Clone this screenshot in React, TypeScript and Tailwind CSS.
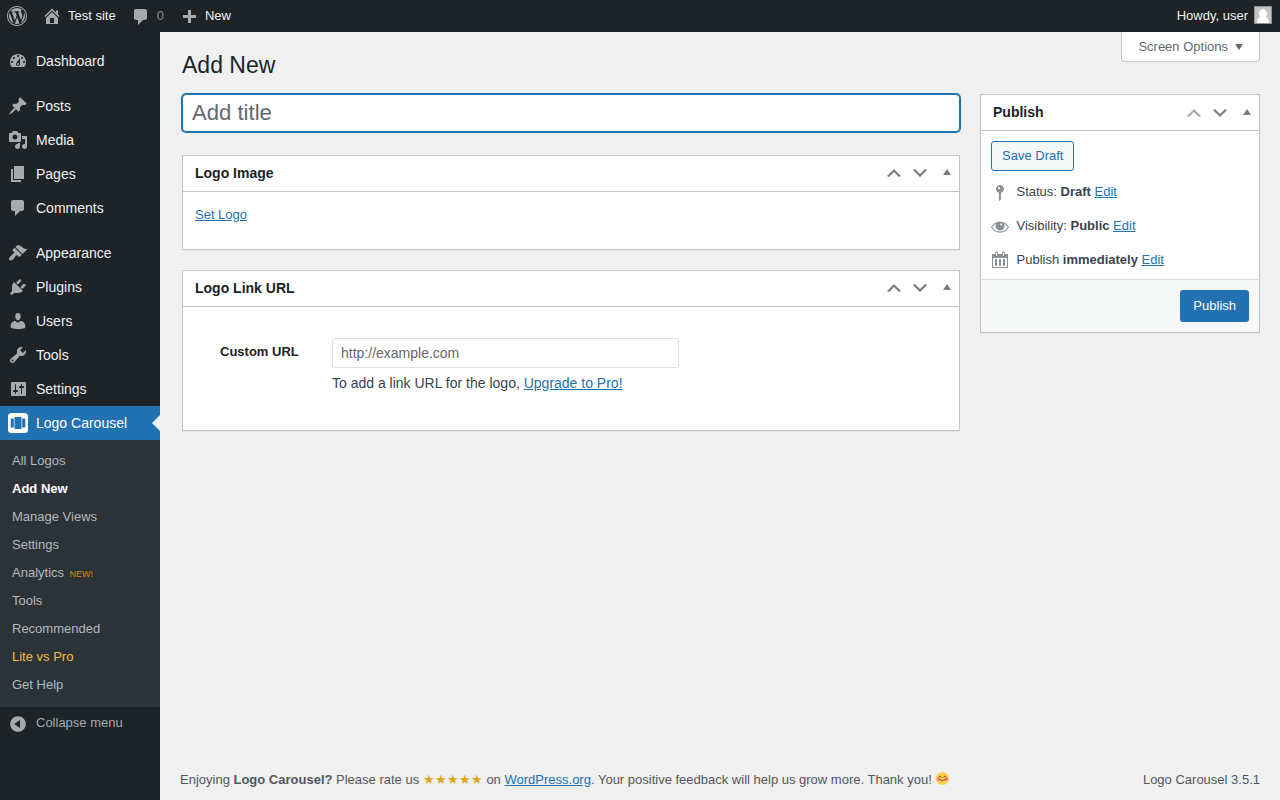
import React from 'react';

const icons = {
  wordpress:
    'M20 10c0-5.52-4.48-10-10-10S0 4.48 0 10s4.48 10 10 10 10-4.48 10-10zM10 1.01c4.97 0 8.99 4.02 8.99 8.99s-4.02 8.99-8.99 8.99S1.01 14.97 1.01 10 5.03 1.01 10 1.01zM8.01 14.82L4.96 6.61c.49-.03 1.05-.08 1.05-.08.43-.05.38-1.01-.06-.99 0 0-1.29.1-2.13.1-.15 0-.33 0-.52-.01 1.44-2.17 3.9-3.6 6.7-3.6 2.09 0 3.99.79 5.41 2.09-.6-.08-1.45.35-1.45 1.42 0 .66.38 1.22.79 1.88.31.54.5 1.22.5 2.21 0 1.34-1.27 4.48-1.27 4.48l-2.71-7.5c.48-.03.75-.16.75-.16.43-.05.38-1.1-.05-1.08 0 0-1.3.11-2.14.11-.78 0-2.11-.11-2.11-.11-.43-.02-.48 1.06-.05 1.08l.84.08 1.12 3.04zm6.02 2.15L16.64 10s.67-1.69.39-3.81c.63 1.14.94 2.42.94 3.81 0 2.96-1.56 5.58-3.94 6.97zM2.68 6.77L6.5 17.25c-2.67-1.3-4.47-4.08-4.47-7.25 0-1.16.2-2.23.65-3.23zm7.45 4.53l2.29 6.25c-.75.27-1.57.42-2.42.42-.72 0-1.41-.11-2.06-.3z',
  home: 'M16 8.5l1.53 1.53-1.06 1.06L10 4.6l-6.47 6.49-1.06-1.06L10 2.5l4 4v-2h2v4zm-6-2.46l6 5.99V18H4v-5.97zM12 17v-5H8v5h4z',
  comments: 'M5 2h9c1.1 0 2 .9 2 2v7c0 1.1-.9 2-2 2h-2l-5 5v-5H5c-1.1 0-2-.9-2-2V4c0-1.1.9-2 2-2z',
  plus: 'M17 7v3h-5v5H9v-5H4V7h5V2h3v5h5z',
  dashboard:
    'M3.76 16h12.48c1.1-1.37 1.76-3.11 1.76-5 0-4.42-3.58-8-8-8s-8 3.58-8 8c0 1.89.66 3.63 1.76 5zM10 4c.55 0 1 .45 1 1s-.45 1-1 1-1-.45-1-1 .45-1 1-1zM6 6c.55 0 1 .45 1 1s-.45 1-1 1-1-.45-1-1 .45-1 1-1zm8 0c.55 0 1 .45 1 1s-.45 1-1 1-1-.45-1-1 .45-1 1-1zm-5.37 5.55L12 7v6c0 1.1-.9 2-2 2s-2-.9-2-2c0-.57.24-1.08.63-1.45zM4 10c.55 0 1 .45 1 1s-.45 1-1 1-1-.45-1-1 .45-1 1-1zm12 0c.55 0 1 .45 1 1s-.45 1-1 1-1-.45-1-1 .45-1 1-1zm-5 3c0-.55-.45-1-1-1s-1 .45-1 1 .45 1 1 1 1-.45 1-1z',
  post: 'M10.44 3.02l1.82-1.82 6.36 6.35-1.83 1.82c-1.05-.68-2.48-.57-3.41.36l-.75.75c-.92.93-1.04 2.35-.35 3.41l-1.83 1.82-2.41-2.41-2.8 2.79c-.42.42-3.38 2.71-3.8 2.29s1.86-3.39 2.28-3.81l2.79-2.79L4.1 9.36l1.83-1.82c1.05.69 2.48.57 3.4-.36l.75-.75c.93-.92 1.05-2.35.36-3.41z',
  media:
    'M13 11V4c0-.55-.45-1-1-1h-1.67L9 1H5L3.67 3H2c-.55 0-1 .45-1 1v7c0 .55.45 1 1 1h10c.55 0 1-.45 1-1zM7 4.5c1.38 0 2.5 1.12 2.5 2.5S8.38 9.5 7 9.5 4.5 8.38 4.5 7 5.62 4.5 7 4.5zM14 6h5v10.5c0 1.38-1.12 2.5-2.5 2.5S14 17.88 14 16.5s1.12-2.5 2.5-2.5c.17 0 .34.02.5.05V9h-3V6zm-4 8.05V13h2v3.5c0 1.38-1.12 2.5-2.5 2.5S7 17.88 7 16.5 8.12 14 9.5 14c.17 0 .34.02.5.05z',
  page: 'M6 15V2h10v13H6zm-1 1h8v2H3V5h2v11z',
  appearance:
    'M14.48 11.06L7.41 3.99l1.5-1.5c.5-.56 2.3-.47 3.51.32 1.21.8 1.43 1.28 2.91 2.1 1.18.64 2.45 1.26 4.45.85zm-.71.71L6.7 4.7 4.93 6.47c-.39.39-.39 1.02 0 1.41l1.06 1.06c.39.39.39 1.03 0 1.42-.6.6-1.43 1.11-2.21 1.69-.35.26-.7.53-1.01.84C1.43 14.23.4 16.08 1.4 17.07c.99 1 2.84-.03 4.18-1.36.31-.31.58-.66.85-1.02.57-.78 1.08-1.61 1.69-2.21.39-.39 1.02-.39 1.41 0l1.06 1.06c.39.39 1.02.39 1.41 0z',
  plugins:
    'M13.11 4.36L9.87 7.6 8 5.73l3.24-3.24c.35-.34 1.05-.2 1.56.32.52.51.66 1.21.31 1.55zm-8 1.77l.91-1.12 9.01 9.01-1.19.84c-.71.71-2.63 1.16-3.82 1.16H6.14L4.9 17.26c-.59.59-1.54.59-2.12 0-.59-.58-.59-1.53 0-2.12l1.24-1.24v-3.88c0-1.13.4-3.19 1.09-3.89zm7.26 3.97l3.24-3.24c.34-.35 1.04-.21 1.55.31.52.51.66 1.21.31 1.55l-3.24 3.25z',
  users:
    'M10 9.25c-2.27 0-2.73-3.44-2.73-3.44C7 4.02 7.82 2 9.97 2c2.16 0 2.98 2.02 2.71 3.81 0 0-.41 3.44-2.68 3.44zm0 2.57L12.72 10c2.39 0 4.52 2.33 4.52 4.53v2.49s-3.65 1.13-7.24 1.13c-3.65 0-7.24-1.13-7.24-1.13v-2.49c0-2.25 1.94-4.48 4.47-4.48z',
  tools:
    'M16.68 9.77c-1.34 1.34-3.3 1.67-4.95.99l-5.41 6.52c-.99.99-2.59.99-3.58 0s-.99-2.59 0-3.57l6.52-5.42c-.68-1.65-.35-3.61.99-4.95 1.28-1.28 3.12-1.62 4.72-1.06l-2.89 2.89 2.82 2.82 2.86-2.87c.53 1.58.18 3.39-1.08 4.65zM3.81 16.21c.4.39 1.04.39 1.43 0 .4-.4.4-1.04 0-1.43-.39-.4-1.03-.4-1.43 0-.39.39-.39 1.03 0 1.43z',
  settings:
    'M18 16V4c0-.55-.45-1-1-1H4c-.55 0-1 .45-1 1v12c0 .55.45 1 1 1h13c.55 0 1-.45 1-1zM8 11h1c.55 0 1 .45 1 1s-.45 1-1 1H8v1.5c0 .28-.22.5-.5.5s-.5-.22-.5-.5V13H6c-.55 0-1-.45-1-1s.45-1 1-1h1V5.5c0-.28.22-.5.5-.5s.5.22.5.5V11zm5-2h-1c-.55 0-1-.45-1-1s.45-1 1-1h1V5.5c0-.28.22-.5.5-.5s.5.22.5.5V7h1c.55 0 1 .45 1 1s-.45 1-1 1h-1v5.5c0 .28-.22.5-.5.5s-.5-.22-.5-.5V9z',
  collapse:
    'M10 2.16c4.33 0 7.84 3.51 7.84 7.84s-3.51 7.84-7.84 7.84S2.16 14.33 2.16 10 5.71 2.16 10 2.16zm2 11.72V6.12L6.18 9.97z',
  up: 'M15 14l-5-5-5 5-2-1 7-7 7 7z',
  down: 'M5 6l5 5 5-5 2 1-7 7-7-7z',
  triangleUp: 'M7 13l4.03-6L15 13H7z',
  triangleDown: 'M15 8l-4.03 6L7 8h8z',
  status:
    'M14 6c0 1.86-1.28 3.41-3 3.86V16c0 1-2 2-2 2V9.86c-1.72-.45-3-2-3-3.86 0-2.21 1.79-4 4-4s4 1.79 4 4zM8 5c0 .55.45 1 1 1s1-.45 1-1-.45-1-1-1-1 .45-1 1z',
  visibility:
    'M10 4.5C6.2 4.5 3 6.8 1 10.2c2 3.2 5.2 5.5 9 5.5s7-2.3 9-5.5c-2-3.4-5.2-5.7-9-5.7zM10 14.6c-3.2 0-5.9-1.7-7.7-4.4 1-1.6 2.4-2.9 4-3.7C5.700 7.200 5.500 8.100 5.500 9c0 2.500 2 4.500 4.500 4.500s4.500-2 4.500-4.500c0-.9-.2-1.800-.8-2.500 1.600.8 3 2.100 4 3.700-1.800 2.700-4.500 4.400-7.700 4.400zM11.200 6.400a1.100 1.100 0 1 1 0 2.200 1.100 1.100 0 0 1 0-2.200z',
  calendar:
    'M15 4h3v14H2V4h3V3c0-.83.67-1.5 1.5-1.5S8 2.17 8 3v1h4V3c0-.83.67-1.5 1.5-1.5S15 2.17 15 3v1zM6 3v2.5c0 .28.22.5.5.5s.5-.22.5-.5V3c0-.28-.22-.5-.5-.5S6 2.72 6 3zm7 0v2.5c0 .28.22.5.5.5s.5-.22.5-.5V3c0-.28-.22-.5-.5-.5s-.5.22-.5.5zm4 14V8H3v9h14zM7 16V9H5v7h2zm4 0V9H9v7h2zm4 0V9h-2v7h2z',
};

type IconName = keyof typeof icons;

function Icon({ name, className = '' }: { name: IconName; className?: string }) {
  return (
    <svg viewBox="0 0 20 20" className={`size-5 shrink-0 ${className}`} fill="currentColor" fillRule="evenodd" aria-hidden="true">
      <path d={icons[name]} />
    </svg>
  );
}

function MenuItem({ icon, label }: { icon: IconName; label: string }) {
  return (
    <a className="flex h-[34px] items-center gap-2 pl-2 text-sm text-[#f0f0f1]">
      <Icon name={icon} className="text-[#a7aaad]" />
      {label}
    </a>
  );
}

function CarouselIcon() {
  return (
    <svg viewBox="0 0 20 20" className="size-5 shrink-0" aria-hidden="true">
      <rect width="20" height="20" rx="3.5" fill="#fff" />
      <rect x="6.5" y="4" width="7" height="12" rx="0.6" fill="#2271b1" />
      <rect x="2.7" y="5.5" width="3.1" height="9" rx="0.6" fill="#2271b1" />
      <rect x="14.2" y="5.5" width="3.1" height="9" rx="0.6" fill="#2271b1" />
    </svg>
  );
}

const submenu = ['All Logos', 'Add New', 'Manage Views', 'Settings', 'Analytics', 'Tools', 'Recommended', 'Lite vs Pro', 'Get Help'];

function submenuColor(label: string) {
  if (label === 'Add New') return 'font-semibold text-white';
  if (label === 'Lite vs Pro') return 'text-[#f8bc3c]';
  return 'text-[#b4b8bc]';
}

function Sidebar() {
  return (
    <nav className="flex w-40 shrink-0 flex-col bg-[#1d2327] pt-3">
      <MenuItem icon="dashboard" label="Dashboard" />
      <div className="mt-[11px]">
        <MenuItem icon="post" label="Posts" />
        <MenuItem icon="media" label="Media" />
        <MenuItem icon="page" label="Pages" />
        <MenuItem icon="comments" label="Comments" />
      </div>
      <div className="mt-[11px]">
        <MenuItem icon="appearance" label="Appearance" />
        <MenuItem icon="plugins" label="Plugins" />
        <MenuItem icon="users" label="Users" />
        <MenuItem icon="tools" label="Tools" />
        <MenuItem icon="settings" label="Settings" />
      </div>
      <a className="relative flex h-[34px] items-center gap-2 bg-[#2271b1] pl-2 text-sm text-white">
        <CarouselIcon />
        Logo Carousel
        <span className="absolute top-[9px] right-0 border-8 border-l-0 border-transparent border-r-[#f0f0f1]" />
      </a>
      <div className="bg-[#2c3338] pt-[7px] pb-2 text-[13px]">
        {submenu.map((label) => (
          <a key={label} className={`flex h-7 items-center pl-3 ${submenuColor(label)}`}>
            {label}
            {label === 'Analytics' && <span className="mt-[3px] ml-[5.5px] text-[9px] text-[#e0820a]">NEW!</span>}
          </a>
        ))}
      </div>
      <a className="flex h-[34px] items-center gap-2 pl-2 text-[13px] text-[#a7aaad]">
        <Icon name="collapse" />
        <span className="mb-[3px]">Collapse menu</span>
      </a>
    </nav>
  );
}

function AdminBar() {
  return (
    <header className="flex h-8 shrink-0 items-center bg-[#1d2327] pl-[7px] text-[13px] text-[#f0f0f1]">
      <Icon name="wordpress" className="text-[#a7aaad]" />
      <Icon name="home" className="ml-[15px] text-[#a7aaad]" />
      <span className="ml-1.5">Test site</span>
      <Icon name="comments" className="mt-0.5 ml-[15px] text-[#a7aaad]" />
      <span className="ml-1.5 text-[#8a8e92]">0</span>
      <Icon name="plus" className="mt-1 ml-[15px] text-[#a7aaad]" />
      <span className="ml-1.5">New</span>
      <span className="ml-auto">Howdy, user</span>
      <svg viewBox="0 0 18 18" className="mb-0.5 mr-2 ml-1.5 size-[18px]" aria-hidden="true">
        <rect x="0.5" y="0.5" width="17" height="17" fill="#c5c5c5" stroke="#8c8f94" />
        <path d="M9 3.200c2.600 0 4 1.800 4 4 0 1.700-.7 2.900-1.600 3.600 2.300.7 3.700 2.900 3.700 6.200H2.900c0-3.300 1.400-5.500 3.700-6.200C5.700 10.100 5 8.900 5 7.200c0-2.200 1.400-4 4-4z" fill="#fff" />
      </svg>
    </header>
  );
}

function Panel({ title, dimUp, children }: { title: string; dimUp?: boolean; children: React.ReactNode }) {
  return (
    <section className="border border-[#c3c4c7] bg-white shadow-[0_1px_1px_rgba(0,0,0,0.04)]">
      <div className="flex h-9 items-center border-b border-[#c3c4c7] pb-0.5 pl-3 text-[#787c82]">
        <h2 className="flex-1 text-sm font-semibold text-[#1d2327]">{title}</h2>
        <div className={`flex ${dimUp ? 'pt-0.5' : ''}`}>
          <Icon name="up" className={dimUp ? 'text-[#a7aaad]' : ''} />
          <Icon name="down" className="ml-1.5" />
          <Icon name="triangleUp" className="-mt-px ml-1.5 mr-[3px]" />
        </div>
      </div>
      {children}
    </section>
  );
}

function Link({ children }: { children: React.ReactNode }) {
  return <a className="text-[#2271b1] underline">{children}</a>;
}

function PublishRow({ icon, label, value }: { icon: IconName; label: string; value: string }) {
  return (
    <div className="flex h-[34px] items-start pt-2 pl-[9px] leading-[18px]">
      <Icon name={icon} className={`mr-[6.5px] text-[#8c8f94] ${icon === 'calendar' ? '-mt-px' : ''}`} />
      <span>
        {label} <b className="font-semibold">{value}</b> <Link>Edit</Link>
      </span>
    </div>
  );
}

function SmilingFace() {
  return (
    <svg viewBox="0 0 36 36" className="ml-px inline size-[13px] align-[-1px]" aria-hidden="true">
      <circle cx="18" cy="18" r="18" fill="#ffcc4d" />
      <circle cx="7" cy="20" r="5" fill="#ff7892" />
      <circle cx="29" cy="20" r="5" fill="#ff7892" />
      <path d="M8 14q4-5 7 0M21 14q3-5 7 0M10 21q8 7 16 0" fill="none" stroke="#664500" strokeWidth="2.5" strokeLinecap="round" />
    </svg>
  );
}

export default function App() {
  return (
    <div className="flex h-screen flex-col overflow-hidden bg-[#f0f0f1] font-['Liberation_Sans',Arial,sans-serif] text-[13px] text-[#3c434a]">
      <AdminBar />
      <div className="flex min-h-0 flex-1">
        <Sidebar />
        <main className="flex flex-1 flex-col pr-5 pl-[22px]">
          <div className="flex h-[62px] items-start justify-between">
            <h1 className="pt-[18px] text-[23px] leading-[30px] text-[#1d2327]">Add New</h1>
            <button className="flex h-[30px] items-center rounded-b border border-t-0 border-[#c3c4c7] bg-white pr-[11px] pl-4 text-[#646970]">
              Screen Options
              <Icon name="triangleDown" className="mt-[-2px]" />
            </button>
          </div>
          <div className="flex items-start gap-5">
            <div className="flex-1">
              <input
                className="h-[38px] w-full rounded border border-[#2271b1] bg-white px-[9px] text-[22.1px] shadow-[0_0_0_1px_#2271b1] outline-none placeholder:text-[#646970]"
                placeholder="Add title"
              />
              <div className="mt-[23px] flex flex-col gap-5">
                <Panel title="Logo Image">
                  <div className="h-[57px] px-3 pt-[13px] leading-5">
                    <Link>Set Logo</Link>
                  </div>
                </Panel>
                <Panel title="Logo Link URL">
                  <div className="flex h-[123px] items-start pt-[31px] pl-[37px]">
                    <label className="w-28 pt-1 font-semibold leading-5 text-[#1d2327]">Custom URL</label>
                    <div className="text-sm">
                      <input
                        className="block h-[30px] w-[347px] rounded-[3px] border border-[#dfdfdf] bg-white px-2 outline-none placeholder:text-[#646970]"
                        placeholder="http://example.com"
                      />
                      <p className="mt-[5px] leading-5">
                        To add a link URL for the logo, <Link>Upgrade to Pro!</Link>
                      </p>
                    </div>
                  </div>
                </Panel>
              </div>
            </div>
            <aside className="w-[280px]">
              <Panel title="Publish" dimUp>
                <div className="h-[148px] pt-2.5">
                  <button className="ml-2.5 block h-[30px] rounded-[3px] border border-[#2271b1] bg-[#f6f7f7] px-2.5 text-[#2271b1]">
                    Save Draft
                  </button>
                  <div className="pt-1">
                    <PublishRow icon="status" label="Status:" value="Draft" />
                    <PublishRow icon="visibility" label="Visibility:" value="Public" />
                    <PublishRow icon="calendar" label="Publish" value="immediately" />
                  </div>
                </div>
                <div className="flex justify-end border-t border-[#dcdcde] bg-[#f6f7f7] p-2.5">
                  <button className="h-8 rounded-[3px] bg-[#2271b1] px-[13px] text-white">Publish</button>
                </div>
              </Panel>
            </aside>
          </div>
          <footer className="mt-auto -ml-0.5 flex h-[41px] items-start justify-between leading-5 text-[#50575e]">
            <p className="pt-[11px]">
              Enjoying <b className="font-semibold">Logo Carousel?</b> Please rate us{' '}
              <span className="text-[#dba617]">★★★★★</span> on <Link>WordPress.org</Link>. Your positive feedback will help us grow more.
              Thank you! <SmilingFace />
            </p>
            <p className="pt-[11px]">Logo Carousel 3.5.1</p>
          </footer>
        </main>
      </div>
    </div>
  );
}
